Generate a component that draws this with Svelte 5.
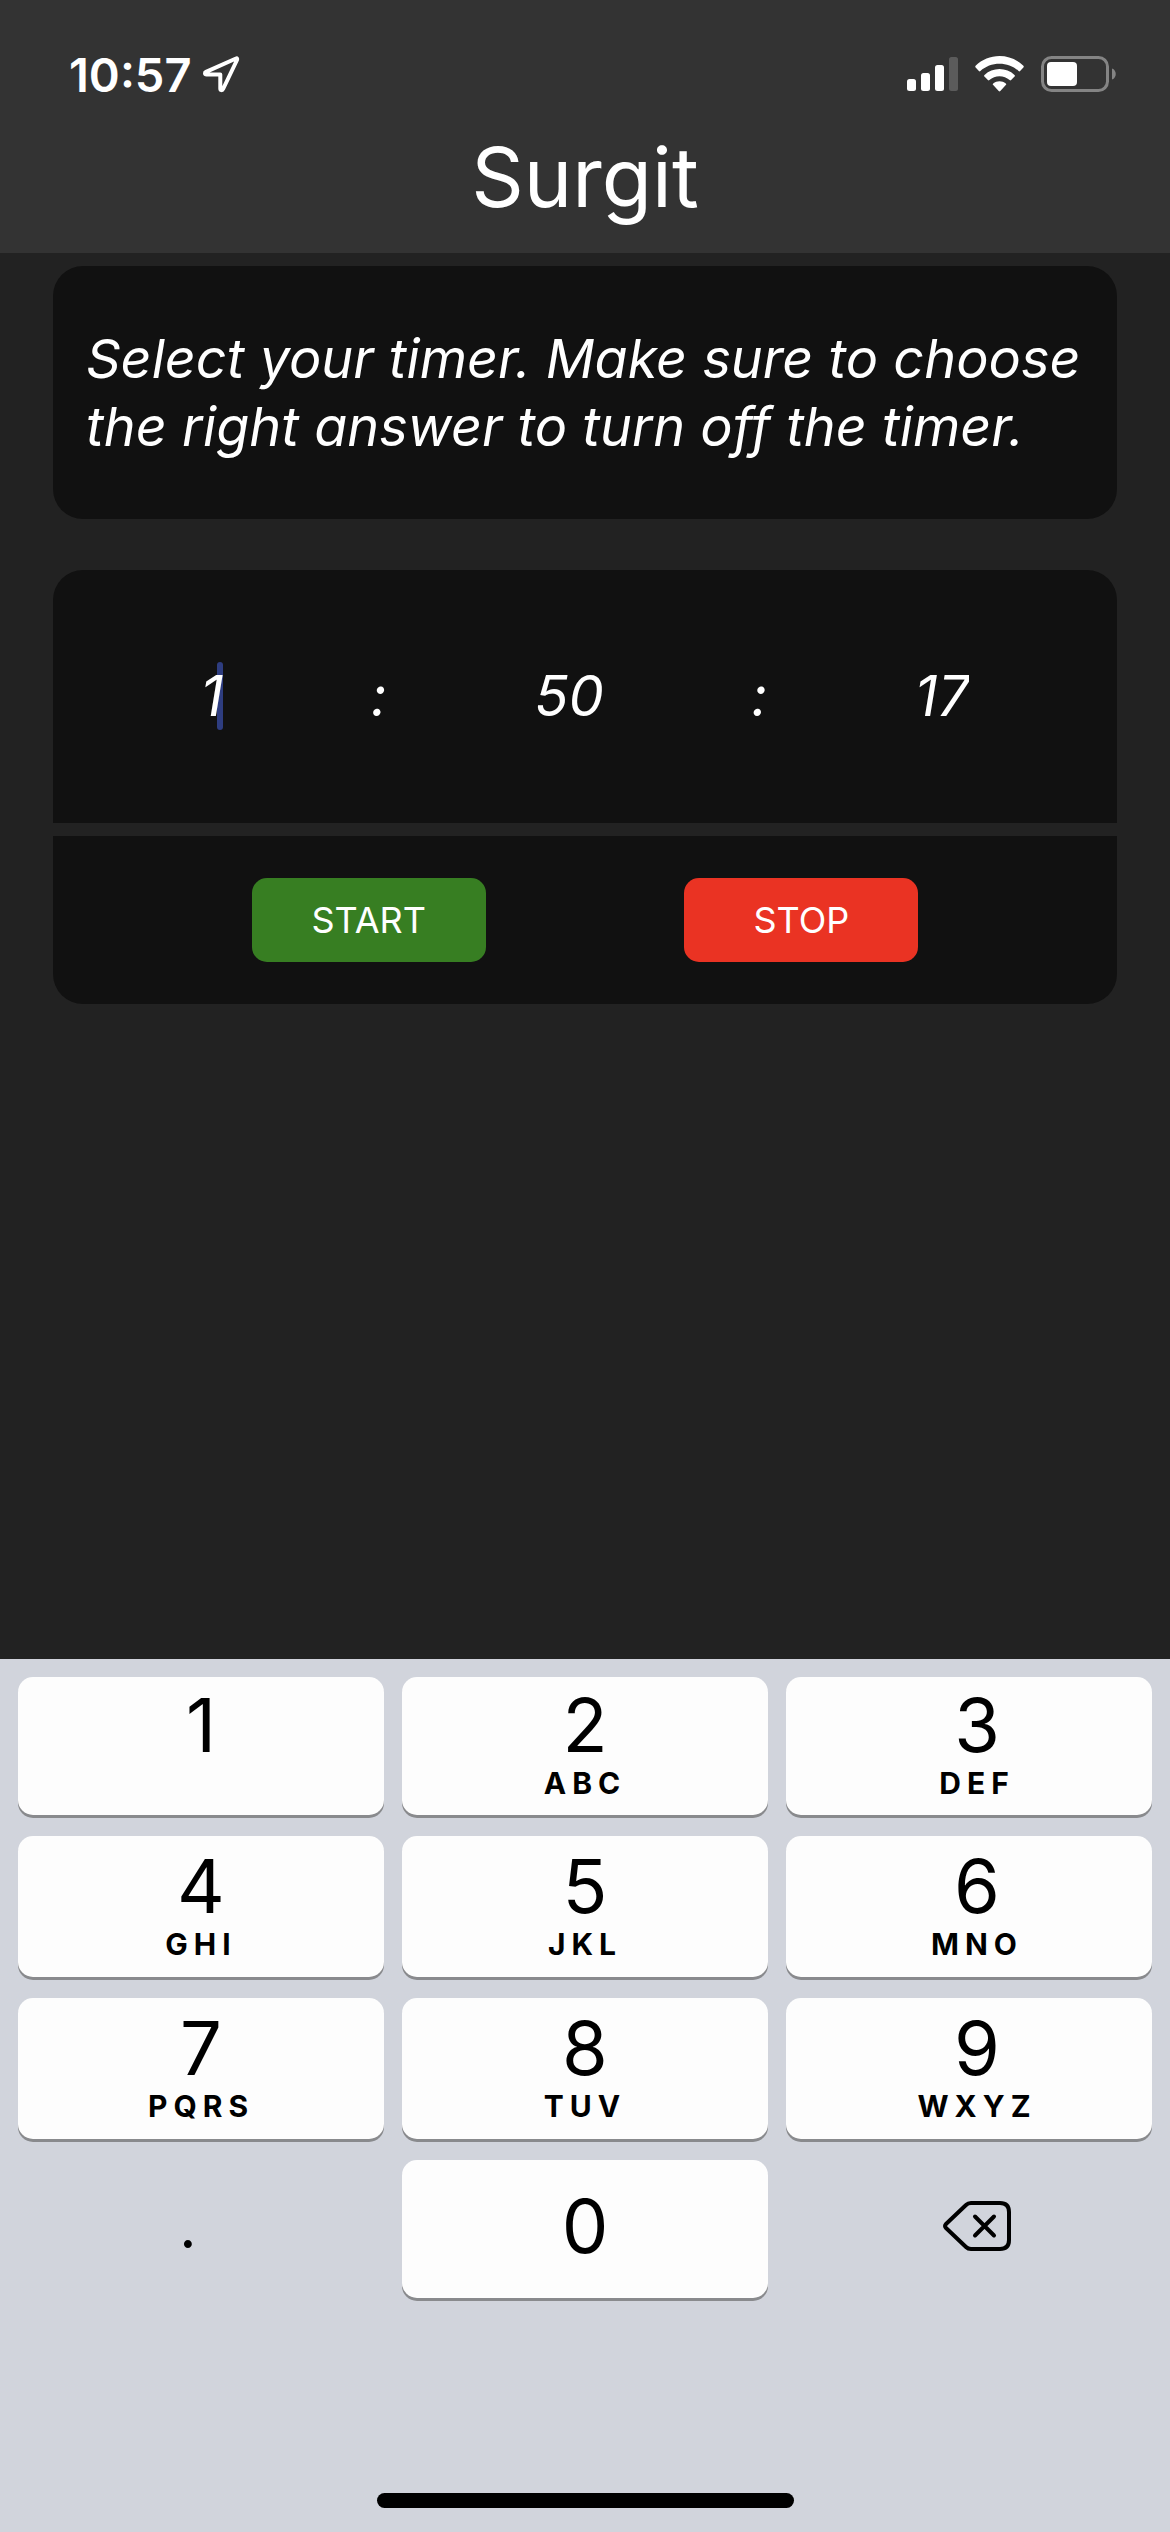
<script lang="ts">
  type Field = { id: string; label: string; value: string };
  type Key = { digit: string; letters: string };

  let fields = $state<Field[]>([
    { id: 'hours', label: 'Hours', value: '1' },
    { id: 'minutes', label: 'Minutes', value: '50' },
    { id: 'seconds', label: 'Seconds', value: '17' },
  ]);

  // The field that the keypad types into.
  let active = $state(0);
  let running = $state(false);

  const keys: Key[] = [
    { digit: '1', letters: '' },
    { digit: '2', letters: 'ABC' },
    { digit: '3', letters: 'DEF' },
    { digit: '4', letters: 'GHI' },
    { digit: '5', letters: 'JKL' },
    { digit: '6', letters: 'MNO' },
    { digit: '7', letters: 'PQRS' },
    { digit: '8', letters: 'TUV' },
    { digit: '9', letters: 'WXYZ' },
  ];

  function press(char: string) {
    const field = fields[active];
    if (field.value.length < 2) field.value += char;
  }

  function erase() {
    fields[active].value = fields[active].value.slice(0, -1);
  }
</script>

<div class="screen">
  <header class="header">
    <div class="status">
      <div class="clock">
        <span>10:57</span>
        <svg width="38" height="38" viewBox="0 0 38 38" aria-hidden="true">
          <path
            d="M34 3.5 4 16.8c-1.6.8-1.3 2.7.5 2.7h13.8v14c0 1.900 2 2.200 2.800.500L35 5c.5-1.200 0-2-1-1.500Z"
            fill="none"
            stroke="#fff"
            stroke-width="4"
            stroke-linejoin="round"
          />
        </svg>
      </div>

      <div class="indicators">
        <svg width="51" height="36" viewBox="0 0 51 36" role="img" aria-label="Signal">
          <g fill="#fff">
            <rect x="0" y="23" width="9" height="12" rx="2.500" />
            <rect x="14" y="17" width="9" height="18" rx="2.500" />
            <rect x="28" y="9" width="9" height="26" rx="2.500" />
            <rect x="42" y="1" width="9" height="34" rx="2.500" opacity="0.2" />
          </g>
        </svg>
        <svg width="49" height="36" viewBox="0 0 49 36" role="img" aria-label="Wi-Fi">
          <g fill="#fff">
            <path d="M24.500 0C15.500 0 7 3.500.600 9.800c-.5.500-.5 1.100 0 1.600l3.300 3.600c.5.500 1 .500 1.500 0C10.500 10.200 17.300 7.700 24.500 7.700s14 2.500 19.100 7.300c.5.500 1 .500 1.500 0l3.300-3.600c.5-.5.5-1.100 0-1.600C42 3.500 33.500 0 24.500 0Z" />
            <path d="M24.500 13c-5.600 0-10.900 2.100-15 5.900-.6.500-.6 1.100-.100 1.600l3.500 3.500c.5.500 1 .500 1.500.100 2.800-2.500 6.300-3.900 10.100-3.900s7.300 1.400 10.100 3.900c.5.400 1 .400 1.500-.100l3.500-3.500c.5-.5.500-1.100-.100-1.600-4.100-3.800-9.400-5.900-15-5.900Z" />
            <path d="M24.500 25.300c-2.300 0-4.500.800-6.300 2.200-.6.500-.6 1 0 1.600l5.500 6c.5.500 1.100.500 1.600 0l5.500-6c.6-.6.600-1.100 0-1.600-1.800-1.400-4-2.200-6.300-2.200Z" />
          </g>
        </svg>
        <svg width="75" height="36" viewBox="0 0 75 36" role="img" aria-label="Battery">
          <rect x="1.500" y="1.500" width="65" height="33" rx="9" fill="none" stroke="#848484" stroke-width="3" />
          <rect x="6" y="6" width="30" height="24" rx="4" fill="#fff" />
          <path d="M71 12.500c5 1.500 5 9.500 0 11Z" fill="#848484" />
        </svg>
      </div>
    </div>
    <h1>Surgit</h1>
  </header>

  <main class="content">
    <p class="card intro">
      Select your timer. Make sure to choose the right answer to turn off the timer.
    </p>

    <form class="timer" onsubmit={(e) => e.preventDefault()}>
      <div class="card fields">
        {#each fields as field, i (field.id)}
          {#if i > 0}<span>:</span>{/if}
          <div class="field" class:active={active === i}>
            <input
              id={field.id}
              aria-label={field.label}
              inputmode="decimal"
              maxlength="2"
              bind:value={field.value}
              onfocus={() => (active = i)}
            />
          </div>
        {/each}
      </div>
      <div class="card actions">
        <button class="start" type="button" onclick={() => (running = true)}>START</button>
        <button class="stop" type="button" onclick={() => (running = false)}>STOP</button>
      </div>
    </form>
  </main>

  <section class="keyboard" aria-label="Keypad">
    <div class="keys">
      {#each keys as key (key.digit)}
        <button class="key" type="button" onclick={() => press(key.digit)}>
          <span class="digit">{key.digit}</span>
          <span class="letters">{key.letters}</span>
        </button>
      {/each}
      <button class="key plain point" type="button" onclick={() => press('.')}>
        <span class="digit">.</span>
      </button>
      <button class="key" type="button" onclick={() => press('0')}>
        <span class="digit">0</span>
      </button>
      <button class="key plain" type="button" aria-label="Delete" onclick={erase}>
        <svg width="68" height="50" viewBox="0 0 68 50" aria-hidden="true">
          <g fill="none" stroke="#000" stroke-width="4" stroke-linecap="round" stroke-linejoin="round">
            <path d="M28 2H57Q66 2 66 11V39Q66 48 57 48H28Q25 48 23 46L3 27Q1 25 3 23L23 4Q25 2 28 2Z" />
            <path d="M32 15.500 51 34.500M51 15.500 32 34.500" />
          </g>
        </svg>
      </button>
    </div>
    <div class="home-bar"></div>
  </section>
</div>

<style>
  :global(body) {
    background: #222;
  }

  .screen {
    display: flex;
    flex-direction: column;
    min-height: 100vh;
    font-family: Inter, 'Liberation Sans', sans-serif;
    color: #fff;
    background: #222;
  }

  .header {
    padding: 48px 0 24px;
    background: #333;
  }

  .status {
    display: flex;
    align-items: center;
    justify-content: space-between;
    height: 52px;
    padding: 0 54px 0 69px;
  }

  .clock,
  .indicators {
    display: flex;
    align-items: center;
  }

  .clock {
    gap: 10px;
    font-size: 47px;
    font-weight: 600;
  }

  .indicators {
    gap: 17px;
  }

  svg {
    display: block;
  }

  h1 {
    margin: 26px 0 0;
    font-size: 82px;
    font-weight: 400;
    line-height: 103px;
    text-align: center;
  }

  .content {
    display: flex;
    flex-direction: column;
    gap: 51px;
    padding: 13px 53px;
  }

  .card {
    background: #111;
    font-size: 54px;
    line-height: 68px;
  }

  .intro,
  .fields {
    font-style: italic;
  }

  .intro {
    margin: 0;
    padding: 59px 33px 58px;
    border-radius: 30px;
  }

  .timer {
    display: flex;
    flex-direction: column;
    gap: 13px;
  }

  .fields {
    display: flex;
    align-items: center;
    justify-content: space-evenly;
    padding: 92px 0 93px;
    border-radius: 30px 30px 0 0;
    font-size: 56px;
  }

  .field {
    position: relative;
  }

  input {
    display: block;
    position: relative;
    field-sizing: content;
    height: 68px;
    padding: 0;
    border: 0;
    outline: 0;
    background: none;
    color: inherit;
    font: inherit;
    caret-color: transparent;
  }

  /* The caret stands behind the digits, at the end of the field. */
  .field.active::before {
    content: '';
    position: absolute;
    top: 0;
    right: 0;
    width: 6px;
    height: 100%;
    border-radius: 3px;
    background: #2e3d80;
  }

  .actions {
    display: flex;
    justify-content: space-evenly;
    padding: 42px 0;
    border-radius: 0 0 30px 30px;
  }

  button {
    padding: 0;
    border: 0;
    color: inherit;
    font: inherit;
  }

  .start,
  .stop {
    width: 234px;
    height: 84px;
    border-radius: 15px;
    font-size: 36px;
    line-height: 44px;
  }

  .start {
    background: #377e22;
  }

  .stop {
    background: #ea3323;
  }

  .keyboard {
    margin-top: auto;
    padding: 18px 18px 24px;
    background: #d1d4dc;
    color: #000;
  }

  .keys {
    display: grid;
    grid-template-columns: repeat(3, 1fr);
    grid-template-rows: 138px 141px 141px 138px;
    gap: 21px 18px;
  }

  .key {
    display: flex;
    flex-direction: column;
    align-items: center;
    justify-content: center;
    padding-bottom: 6px;
    border-radius: 15px;
    background: #fdfdfd;
    box-shadow: 0 3px 0 #898a8d;
  }

  .key:nth-child(3n) {
    padding-left: 16px;
  }

  .plain {
    background: none;
    box-shadow: none;
  }

  .point {
    padding-right: 26px;
  }

  .digit {
    font-size: 74px;
    line-height: 80px;
  }

  .point .digit {
    font-size: 60px;
  }

  .letters {
    height: 36px;
    font-size: 30px;
    font-weight: 700;
    line-height: 36px;
    letter-spacing: 6px;
  }

  .home-bar {
    width: 417px;
    height: 15px;
    margin: 195px auto 0;
    border-radius: 8px;
    background: #000;
  }
</style>
